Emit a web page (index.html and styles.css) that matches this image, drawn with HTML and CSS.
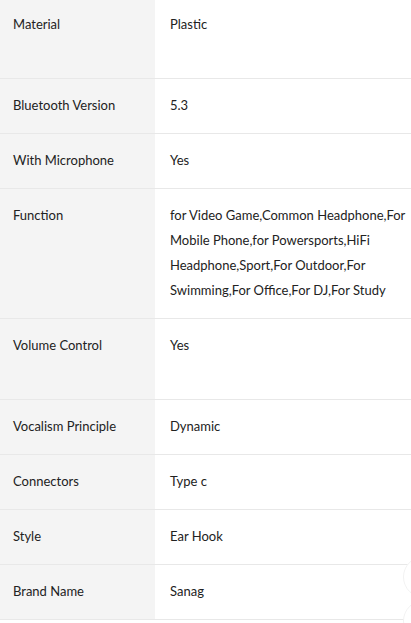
FILE: index.html
```html
<!DOCTYPE html>
<html>
<head>
<meta charset="utf-8">
<link rel="stylesheet" href="styles.css">
</head>
<body>
<div class="specs">
  <div class="row tall"><div class="label">Material</div><div class="value">Plastic</div></div>
  <div class="row"><div class="label">Bluetooth Version</div><div class="value">5.3</div></div>
  <div class="row"><div class="label">With Microphone</div><div class="value">Yes</div></div>
  <div class="row"><div class="label">Function</div><div class="value">for Video Game,Common Headphone,For Mobile Phone,for Powersports,HiFi Headphone,Sport,For Outdoor,For Swimming,For Office,For DJ,For Study</div></div>
  <div class="row tall"><div class="label">Volume Control</div><div class="value">Yes</div></div>
  <div class="row"><div class="label">Vocalism Principle</div><div class="value">Dynamic</div></div>
  <div class="row"><div class="label">Connectors</div><div class="value">Type c</div></div>
  <div class="row"><div class="label">Style</div><div class="value">Ear Hook</div></div>
  <div class="row"><div class="label">Brand Name</div><div class="value">Sanag</div></div>
</div>
<div class="fab fab-one"></div>
<div class="fab fab-two"></div>
</body>
</html>
```
FILE: styles.css
```css
html, body {
  margin: 0;
  padding: 0;
  background: #fff;
  overflow: hidden;
}
body {
  font-family: "Lato", "Open Sans", sans-serif;
  font-size: 13px;
  color: #222;
}
.specs {
  margin-top: -2px;
}
.row {
  display: grid;
  grid-template-columns: 155px 1fr;
  border-bottom: 1px solid #e8e8e8;
}
.row.tall {
  min-height: 80px;
}
.label {
  background: #f4f4f4;
  padding: 14px 8px 15px 13px;
  line-height: 25px;
}
.value {
  padding: 14px 4px 15px 15px;
  line-height: 25px;
}
.fab {
  position: fixed;
  width: 40px;
  height: 40px;
  border-radius: 50%;
  background: #fff;
  border: 1px solid #f2f2f2;
  right: -34px;
}
.fab-one { top: 556px; }
.fab-two { top: 600px; }
```
